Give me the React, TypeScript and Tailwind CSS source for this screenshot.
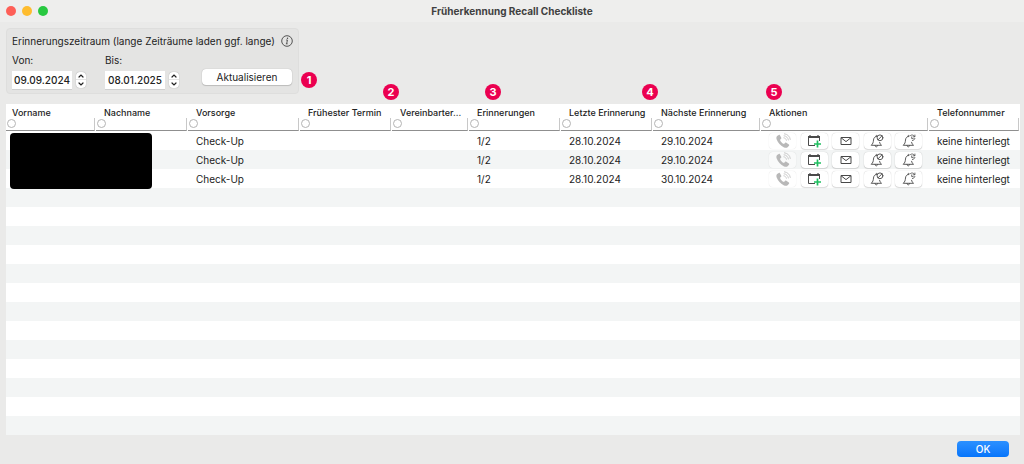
import { useState } from 'react';
import type { ReactNode } from 'react';

const columns = [
  { label: 'Vorname', width: 'w-[90px]', pad: 'pl-1.5' },
  { label: 'Nachname', width: 'w-[92px]', pad: 'pl-2' },
  { label: 'Vorsorge', width: 'w-[112px]', pad: 'pl-2' },
  { label: 'Frühester Termin', width: 'w-[92px]', pad: 'pl-2' },
  { label: 'Vereinbarter...', width: 'w-[77px]', pad: 'pl-2' },
  { label: 'Erinnerungen', width: 'w-[92px]', pad: 'pl-2' },
  { label: 'Letzte Erinnerung', width: 'w-[92px]', pad: 'pl-2' },
  { label: 'Nächste Erinnerung', width: 'w-[108px]', pad: 'pl-2' },
  { label: 'Aktionen', width: 'w-[168px]', pad: 'pl-2' },
  { label: 'Telefonnummer', width: '', pad: 'pl-2' },
];

const entries = [
  { check: 'Check-Up', count: '1/2', last: '28.10.2024', next: '29.10.2024', phone: 'keine hinterlegt' },
  { check: 'Check-Up', count: '1/2', last: '28.10.2024', next: '29.10.2024', phone: 'keine hinterlegt' },
  { check: 'Check-Up', count: '1/2', last: '28.10.2024', next: '30.10.2024', phone: 'keine hinterlegt' },
];

const emptyRows = Array.from({ length: 13 }, (_, i) => i);

function Badge({ n, className = '' }: { n: number; className?: string }) {
  return (
    <span
      className={`flex size-4 items-center justify-center rounded-full bg-[#eb0050] text-[11px] font-bold leading-none text-white ${className}`}
    >
      {n}
    </span>
  );
}

function PhoneIcon() {
  return (
    <svg viewBox="0 0 16 16" className="size-4" fill="none" aria-hidden="true">
      <path
        d="M3.800 1.900 2.100 3C1.300 3.700 1.200 5.200 1.800 6.800c1.200 3.100 3.700 5.800 6.800 7.400 1.700.8 3.200.9 4 .1l1.400-1.500c.4-.5.3-.9-.1-1.200l-2.600-1.800c-.4-.3-.9-.2-1.300.1l-.8.900c-.2.2-.5.2-.8 0C6.900 9.900 5.900 8.700 5.200 7.400c-.2-.3-.1-.6.100-.8l.8-.8c.3-.3.4-.700.200-1.100L4.900 2.200c-.2-.4-.7-.5-1.100-.3Z"
        fill="#b8b8b8"
      />
      <path d="M8.800 4.800c1.400.2 2.300 1.100 2.600 2.500M9.100 2.800c2.300.3 3.900 1.900 4.300 4.200M9.400.8c3.200.4 5.400 2.500 5.900 5.600" stroke="#bcbcbc" strokeWidth=".8" strokeLinecap="round" />
    </svg>
  );
}

function CalendarPlusIcon() {
  return (
    <svg viewBox="0 0 16 14" className="h-3.5 w-4" fill="none" aria-hidden="true">
      <path d="M2.500 3v8.500h6.500M13.500 3v4" stroke="#4a4a4a" />
      <path d="M2 3h12" stroke="#4a4a4a" strokeWidth="2" />
      <path d="M4 1v2M12 1v2" stroke="#4a4a4a" strokeWidth="1.200" />
      <path d="M11.500 6.500v7M8 10h7" stroke="#1fbf60" strokeWidth="1.700" />
    </svg>
  );
}

function MailIcon() {
  return (
    <svg viewBox="0 0 12 10" className="h-2.5 w-3" fill="none" stroke="#484848" aria-hidden="true">
      <path d="M1 1.500h10v7H1z" />
      <path d="m1 1.700 5 3.900 5-3.900" />
    </svg>
  );
}

function BellIcon({ children }: { children: ReactNode }) {
  return (
    <svg viewBox="0 0 14 14" className="size-3.5" fill="none" stroke="#484848" strokeWidth=".9" strokeLinecap="round" strokeLinejoin="round" aria-hidden="true">
      <path d="M6.600 2.500C4.600 2.600 3.700 4 3.500 6c-.2 2.400-.5 3.700-2.300 5.300h10.300c-1-.8-1.600-1.700-1.900-3" />
      <path d="M5 11.500c.1 1.900 2.500 1.900 2.600 0M5.800 2.300c0-.9.800-1.200 1.300-.9" />
      {children}
    </svg>
  );
}

function BellOffIcon() {
  return (
    <BellIcon>
      <circle cx="10" cy="3.800" r="2.900" />
      <path d="m8.100 5.800 3.900-4" />
    </BellIcon>
  );
}

function BellSnoozeIcon() {
  return (
    <BellIcon>
      <path d="M8 1.900c1.400-1.500 3.700-1.200 4.600.6M9.700 2.900v1.700h1.500M12.900 1v1.800h-1.700" strokeWidth=".8" />
      <path d="M12.800 4.500c-.5 1.500-1.900 2.300-3.500 2" strokeDasharray="1 1.200" strokeWidth=".9" />
    </BellIcon>
  );
}

function ActionButton({ label, disabled = false, children }: { label: string; disabled?: boolean; children: ReactNode }) {
  return (
    <button
      type="button"
      aria-label={label}
      disabled={disabled}
      className="flex h-4 w-[27px] items-center justify-center rounded bg-white shadow-[0_0_1px_rgba(0,0,0,0.25),0_1px_1px_rgba(0,0,0,0.12)] disabled:bg-white/50 disabled:shadow-[0_0_1px_rgba(0,0,0,0.18)]"
    >
      {children}
    </button>
  );
}

function DateField({ id, label, initial }: { id: string; label: string; initial: string }) {
  const [value, setValue] = useState(initial);
  const shift = (days: number) => {
    const [d, m, y] = value.split('.').map(Number);
    const date = new Date(y, m - 1, d + days);
    if (Number.isNaN(date.getTime())) return;
    const two = (n: number) => String(n).padStart(2, '0');
    setValue(`${two(date.getDate())}.${two(date.getMonth() + 1)}.${date.getFullYear()}`);
  };
  return (
    <div className="flex w-[93px] flex-col gap-1">
      <label htmlFor={id} className="leading-[14px]">{label}</label>
      <div className="flex items-center gap-1">
        <input
          id={id}
          value={value}
          onChange={(e) => setValue(e.target.value)}
          className="h-[18px] w-[60px] bg-white text-center font-medium text-[#222] shadow-[0_1px_0_#cfcfcf] outline-none"
        />
        <div className="flex h-4 w-2.5 flex-col rounded-[4px] bg-white shadow-[0_0_1px_rgba(0,0,0,0.4)]">
          <button type="button" aria-label={`${label} später`} onClick={() => shift(1)} className="flex h-2 items-center justify-center border-b border-[#e4e4e4]">
            <svg viewBox="0 0 6 4" className="h-1 w-1.5" fill="none" stroke="#222" strokeWidth="1.200" strokeLinecap="round"><path d="m1 3 2-2 2 2" /></svg>
          </button>
          <button type="button" aria-label={`${label} früher`} onClick={() => shift(-1)} className="flex h-2 items-center justify-center">
            <svg viewBox="0 0 6 4" className="h-1 w-1.5" fill="none" stroke="#222" strokeWidth="1.200" strokeLinecap="round"><path d="m1 1 2 2 2-2" /></svg>
          </button>
        </div>
      </div>
    </div>
  );
}

export default function App() {
  return (
    <div className="flex min-h-screen flex-col bg-[#eaeae9] font-['Inter','Liberation_Sans',sans-serif] text-[10px] text-[#222]">
      <header className="grid h-[22px] grid-cols-[1fr_auto_1fr] items-center bg-[#eeeeed] px-1.5">
        <div className="flex gap-1.5">
          <button type="button" aria-label="Schließen" className="size-2.5 rounded-full bg-[#fe5f57]" />
          <button type="button" aria-label="Minimieren" className="size-2.5 rounded-full bg-[#febc2e]" />
          <button type="button" aria-label="Vergrößern" className="size-2.5 rounded-full bg-[#28c840]" />
        </div>
        <h1 className="font-bold text-[#404040]">Früherkennung Recall Checkliste</h1>
      </header>

      <main className="flex grow flex-col pl-1.5 pr-1 pt-1.5">
        <div className="flex items-end gap-0.5">
          <section className="w-[293px] rounded border border-[#dededd] bg-[#e4e4e3] px-[5px] pb-1 pt-1">
            <div className="flex items-center gap-1.5 leading-4">
              <h2 className="whitespace-nowrap">Erinnerungszeitraum (lange Zeiträume laden ggf. lange)</h2>
              <svg viewBox="0 0 12 12" className="size-3 shrink-0" fill="none" role="img" aria-label="Info">
                <circle cx="6" cy="6" r="5.300" stroke="#444" strokeWidth=".9" />
                <path d="M5.200 5h1.200L5.700 8.700M4.900 8.800h1.700" stroke="#444" strokeWidth=".9" />
                <circle cx="6.500" cy="3.200" r=".7" fill="#444" />
              </svg>
            </div>
            <div className="mt-1 flex">
              <DateField id="von" label="Von:" initial="09.09.2024" />
              <DateField id="bis" label="Bis:" initial="08.01.2025" />
              <button type="button" className="mb-1 ml-1 h-4 w-[90px] self-end rounded bg-white leading-none shadow-[0_0_1px_rgba(0,0,0,0.3),0_1px_1px_rgba(0,0,0,0.15)]">
                Aktualisieren
              </button>
            </div>
          </section>
          <Badge n={1} className="mb-1.5" />
        </div>

        <div className="relative mt-2.5 bg-white">
          <Badge n={2} className="absolute -top-5 left-[377px]" />
          <Badge n={3} className="absolute -top-5 left-[479px]" />
          <Badge n={4} className="absolute -top-5 left-[636px]" />
          <Badge n={5} className="absolute -top-5 left-[760px]" />
          <table className="w-full table-fixed border-collapse">
            <colgroup>
              {columns.map((c) => (
                <col key={c.label} className={c.width} />
              ))}
            </colgroup>
            <thead>
              <tr>
                {columns.map((c) => (
                  <th key={c.label} scope="col" className="p-0 text-left">
                    <div className="flex h-[27px] flex-col pt-0.5">
                      <label htmlFor={c.label} className={`mr-px h-3 whitespace-nowrap text-[9px] font-medium leading-[13px] text-[#222] ${c.pad}`}>
                        {c.label}
                      </label>
                      <div className="mr-px flex h-[13px] items-start border-b border-r border-b-[#8f8f8f] border-r-[#c8c8c8] pl-px pt-px">
                        <input
                          id={c.label}
                          type="radio"
                          name="spaltenfilter"
                          className="size-[9px] appearance-none rounded-full border border-[#b4b4b4] bg-white checked:bg-[#0a7aff]"
                        />
                      </div>
                    </div>
                  </th>
                ))}
              </tr>
            </thead>
            <tbody>
              {entries.map((e, i) => (
                <tr key={i} className="h-[19px] whitespace-nowrap even:bg-[#f3f5f5]">
                  <td className="p-0" />
                  <td className="p-0" />
                  <td className="p-0 pl-2 leading-4">{e.check}</td>
                  <td className="p-0" />
                  <td className="p-0" />
                  <td className="p-0 pl-2 leading-4">{e.count}</td>
                  <td className="p-0 pl-2 leading-4">{e.last}</td>
                  <td className="p-0 pl-2 leading-4">{e.next}</td>
                  <td className="p-0 pl-2">
                    <div className="flex w-[153px] justify-between">
                      <ActionButton label="Anrufen" disabled><PhoneIcon /></ActionButton>
                      <ActionButton label="Termin anlegen"><CalendarPlusIcon /></ActionButton>
                      <ActionButton label="E-Mail senden"><MailIcon /></ActionButton>
                      <ActionButton label="Erinnerung abschalten"><BellOffIcon /></ActionButton>
                      <ActionButton label="Erinnerung verschieben"><BellSnoozeIcon /></ActionButton>
                    </div>
                  </td>
                  <td className="p-0 pl-2 leading-4">{e.phone}</td>
                </tr>
              ))}
              {emptyRows.map((r) => (
                <tr key={`leer-${r}`} className="h-[19px] even:bg-[#f3f5f5]">
                  <td colSpan={10} className="p-0" />
                </tr>
              ))}
            </tbody>
          </table>
          <div className="absolute left-1 top-[29px] h-14 w-[142px] rounded bg-black" />
        </div>

        <footer className="flex justify-end pb-2 pr-[11px] pt-1.5">
          <button type="button" className="h-4 w-[52px] rounded bg-linear-to-b from-[#2b90ff] to-[#0575fb] font-medium leading-none text-white">
            OK
          </button>
        </footer>
      </main>
    </div>
  );
}
